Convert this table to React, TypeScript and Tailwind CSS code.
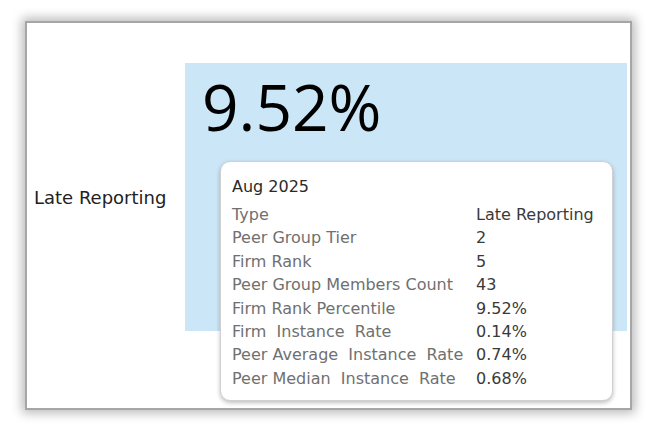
const rows: [string, string][] = [
  ["Type", "Late Reporting"],
  ["Peer Group Tier", "2"],
  ["Firm Rank", "5"],
  ["Peer Group Members Count", "43"],
  ["Firm Rank Percentile", "9.52%"],
  ["Firm  Instance  Rate", "0.14%"],
  ["Peer Average  Instance  Rate", "0.74%"],
  ["Peer Median  Instance  Rate", "0.68%"],
];

export default function App() {
  return (
    <div className="w-[656px] h-[433px] bg-white overflow-hidden font-['DejaVu_Sans',sans-serif] pt-[21px] pl-[25px]">
      <div className="relative w-[607px] h-[389px] bg-white border-2 border-[#a6a6a6] shadow-[0_0_10px_3px_rgba(0,0,0,0.28)]">
        <div className="flex items-center pt-[40px]">
          <div className="w-[158px] pl-[7px] text-[18px] text-[#222]">Late Reporting</div>

          {/* KPI panel */}
          <div className="relative w-[442px] h-[268px] bg-[#cbe6f7]">
            <div className="pl-[17px] pt-[12px] font-['Open_Sans',sans-serif] text-[64px] leading-none text-black">9.52%</div>

            {/* tooltip */}
            <div className="absolute left-[35px] top-[98px] w-[393px] h-[240px] bg-white rounded-[10px] border border-[#d0d0d0] shadow-[0_2px_4px_rgba(0,0,0,0.25)] pl-[11px] pt-[13px]">
              <div className="text-[16px] leading-[23px] text-[#2a2a2a]">Aug 2025</div>
              <div className="mt-[5px] grid grid-cols-[244px_1fr] text-[16px] leading-[23.4px]">
                {rows.map(([k, v]) => (
                  <div key={k} className="contents">
                    <div className="text-[#707070] whitespace-pre">{k}</div>
                    <div className="text-[#3a3a3a]">{v}</div>
                  </div>
                ))}
              </div>
            </div>
          </div>
        </div>
      </div>
    </div>
  );
}
